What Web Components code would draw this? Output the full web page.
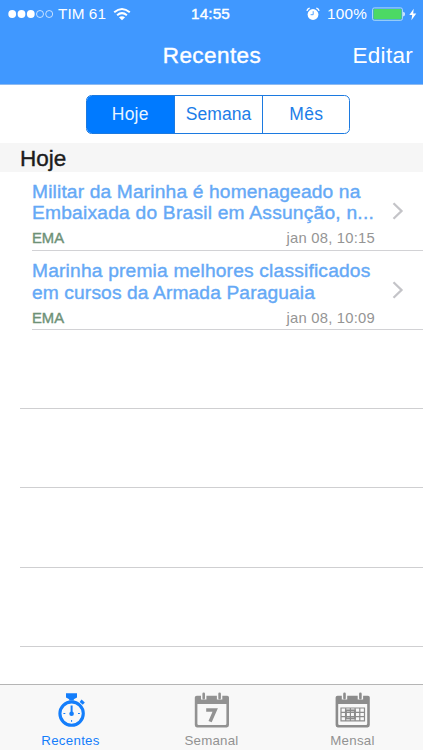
<!DOCTYPE html>
<html lang="pt">
<head>
<meta charset="utf-8">
<title>Recentes</title>
<style>
html,body{margin:0;height:100%;background:#fff;overflow:hidden}
body{font-family:"Liberation Sans",Arial,sans-serif}
</style>
</head>
<body>
<recent-app></recent-app>
<script>
const define = (name, html, ready) => customElements.define(name, class extends HTMLElement {
  connectedCallback() {
    if (this.shadowRoot) return;
    const t = document.createElement('template');
    t.innerHTML = typeof html === 'function' ? html(this) : html;
    this.attachShadow({mode: 'open'}).append(t.content.cloneNode(true));
    if (ready) ready(this);
  }
});

/* A single line of text tracked to a given width */
define('tracked-text', `<style>
:host{display:block;white-space:nowrap;line-height:1}
:host([medium]){-webkit-text-stroke:.4px currentColor}
span{display:inline-block}
</style><span><slot></slot></span>`, el => {
  const s = el.shadowRoot.querySelector('span'), w = +el.getAttribute('width');
  const n = el.textContent.length;
  s.style.letterSpacing = (w - s.getBoundingClientRect().width) / n + 'px';
});

define('status-bar', `<style>
:host{display:flex;height:28px;align-items:center;position:relative;color:#fff;font-size:15.3px;padding:0 6px 0 8px;box-sizing:border-box}
svg{display:block;flex:none}
.dots{margin-right:5px}
.wifi{margin-left:7px}
.time{margin-left:60px}
.alarm{margin-left:76px;margin-right:7px}
.bat{margin-left:5px}
.bolt{margin-left:4px}
</style>
<svg class="dots" width="45" height="10" viewBox="0 0 45 10"><g fill="#fff"><circle cx="4.2" cy="5" r="3.9"/><circle cx="13.5" cy="5" r="3.9"/><circle cx="22.8" cy="5" r="3.9"/></g><g fill="none" stroke="#fff" stroke-width=".7"><circle cx="32" cy="5" r="3.5"/><circle cx="41.2" cy="5" r="3.5"/></g></svg>
<tracked-text width="48">TIM 61</tracked-text>
<svg class="wifi" width="18" height="14" viewBox="0 0 18 14"><g fill="none" stroke="#fff" stroke-width="2"><path d="M1.2 5.3Q9-1.4 16.8 5.3"/><path d="M4.1 8.2Q9 4.1 13.9 8.2"/></g><path d="M9 13.3L5.9 10.3Q9 8 12.1 10.3Z" fill="#fff"/></svg>
<tracked-text class="time" medium width="39">14:55</tracked-text>
<svg class="alarm" width="14" height="14" viewBox="0 0 14 14"><circle cx="7" cy="7.5" r="5.4" fill="#fff"/><path d="M1 4.1Q1.1 1.7 3.7 1.1M13 4.1Q12.9 1.7 10.3 1.1" fill="none" stroke="#fff" stroke-width="1.1"/><path d="M7.2 4.2V7.7H4.6" fill="none" stroke="#4098ff" stroke-width=".9"/></svg>
<tracked-text width="40">100%</tracked-text>
<svg class="bat" width="33" height="14" viewBox="0 0 33 14"><rect x=".5" y=".9" width="30" height="12.4" rx="1.8" fill="#4098ff" stroke="#c7e9f4" stroke-width=".8"/><rect x="1.5" y="1.9" width="28" height="10.4" rx=".8" fill="#4cd964"/><path d="M31.3 4.8Q32.8 5 32.8 7.1T31.3 9.4Z" fill="#fff"/></svg>
<svg class="bolt" width="8" height="13" viewBox="0 0 8 13"><path d="M4.7.8L.3 7.1H3.2L2.4 12.2L7.3 5.5H4.2Z" fill="#fff"/></svg>`);

define('nav-bar', `<style>
:host{display:block;height:85px;box-sizing:border-box;background:#4098ff;border-bottom:1px solid #8ebaf0;color:#fff}
.row{display:grid;grid-template-columns:1fr auto 1fr;align-items:center;height:56px;padding:0 10px 0 11px;font-size:22.5px}
.edit{justify-self:end}
</style><slot name="status"></slot>
<div class="row"><i></i><tracked-text medium width="98.5">Recentes</tracked-text><tracked-text class="edit" width="60.5">Editar</tracked-text></div>`);

define('segment-control', `<style>
:host{display:flex;justify-content:center;padding:10px 0 9px 13px;height:58px;box-sizing:border-box;color:#1c7de8;font-size:17.5px}
.box{display:grid;grid-template-columns:87px 88.5px 87px;width:264.5px;height:38.5px;box-sizing:border-box;border:1px solid #1c7ae0;border-radius:5.5px;overflow:hidden}
.box div{display:flex;align-items:center;justify-content:center}
.box div+div{border-left:1px solid #1c7ae0}
.box .on{background:#007aff;color:#e8f5ff}
</style><div class="box"><div class="on"><tracked-text width="37">Hoje</tracked-text></div><div><tracked-text width="65.5">Semana</tracked-text></div><div><tracked-text width="34">Mês</tracked-text></div></div>`);

define('section-header', `<style>
:host{display:flex;align-items:center;height:28.5px;padding:3px 0 0 20px;box-sizing:border-box;background:#f6f6f6;color:#1c1c1c;font-size:22.5px}
</style><tracked-text medium width="49"><slot></slot></tracked-text>`);

define('news-row', el => `<style>
:host{display:grid;grid-template-columns:343px 1fr;height:79.2px;padding-left:32px;box-sizing:border-box;position:relative}
:host::after{content:"";position:absolute;left:32px;right:0;bottom:0;height:1px;background:#d2d2d5}
.title{color:#65a9f6;font-size:19.2px;padding-top:10.2px}
.title tracked-text{height:21.7px}
.meta{display:flex;justify-content:space-between;font-size:14.8px;padding-top:6.3px;color:#959595}
.src{color:#6e9177}
svg{align-self:center;margin-left:17px}
</style><div><div class="title"><tracked-text medium width="${el.getAttribute('w1')}">${el.getAttribute('line1')}</tracked-text><tracked-text medium width="${el.getAttribute('w2')}">${el.getAttribute('line2')}</tracked-text></div>
<div class="meta"><tracked-text class="src" medium width="32">EMA</tracked-text><tracked-text width="88.5">${el.getAttribute('date')}</tracked-text></div></div>
<svg width="13" height="20" viewBox="0 0 13 20"><path d="M1.5 2.2L9.5 10L1.5 17.8" fill="none" stroke="#c4c4c8" stroke-width="2.3"/></svg>`);

define('empty-row', `<style>:host{display:block;height:79.3px;margin-left:20px;box-sizing:border-box;border-bottom:1px solid #cfcfd1}</style>`);

define('tab-item', el => `<style>
:host{display:flex;flex-direction:column;align-items:center;font-size:13.3px;color:#929292;padding-top:6px}
:host([active]){color:#147efb}
.icon{height:43px;display:block}
</style><slot class="icon"></slot><tracked-text width="${el.getAttribute('width')}">${el.getAttribute('label')}</tracked-text>`);

define('tab-bar', `<style>
:host{display:grid;grid-template-columns:repeat(3,1fr);height:66px;box-sizing:border-box;border-top:1px solid #b5b5b5;background:#f8f8f8}
svg{display:block}
</style>
<tab-item active label="Recentes" width="58.5"><svg width="40" height="40" viewBox="0 0 40 40">
<g fill="#147efb"><path d="M15 2.2H26V6.4L22.8 8.2V9.5H18.2V8.2L15 6.4Z"/><path d="M30.6 8.6L33.8 11.4L31.8 13.8L28.6 11Z"/></g>
<circle cx="20.6" cy="22.6" r="11.7" fill="none" stroke="#147efb" stroke-width="3.1"/><path d="M20.6 14.5V22" stroke="#147efb" stroke-width="2"/><circle cx="20.6" cy="22.8" r="2.3" fill="#147efb"/><path d="M12.4 22.5H14.3M27 22.5H28.9M20.6 29V30.9" stroke="#147efb"/></svg></tab-item>
<tab-item label="Semanal" width="54"><svg width="40" height="40" viewBox="-.2 0 40 40">
<path fill="#929292" fill-rule="evenodd" d="M4.6 4.7H35Q36.8 4.7 36.8 6.5V34Q36.8 36.4 34.6 36.4H4.8Q2.6 36.4 2.6 34V6.5Q2.6 4.7 4.6 4.7ZM5.2 13V32.8Q5.2 34 6.4 34H33Q34.2 34 34.2 32.8V13Z"/>
<path d="M11.5 0V8.5M27.4 0V8.5" stroke="#f8f8f8" stroke-width="5.4"/><path d="M11.5 2.8V7.3M27.4 2.8V7.3" stroke="#929292" stroke-width="2.6" stroke-linecap="round"/>
<path d="M14 19H23L17.9 30.6" fill="none" stroke="#929292" stroke-width="3.5"/></svg></tab-item>
<tab-item label="Mensal" width="44.5"><svg width="40" height="40" viewBox="0 0 40 40">
<path fill="#8c8c8c" fill-rule="evenodd" d="M4.6 4.7H35Q36.8 4.7 36.8 6.5V34Q36.8 36.4 34.6 36.4H4.8Q2.6 36.4 2.6 34V6.5Q2.6 4.7 4.6 4.7ZM5.2 13V32.8Q5.2 34 6.4 34H33Q34.2 34 34.2 32.8V13Z"/>
<path d="M11.5 0V8.5M27.4 0V8.5" stroke="#f8f8f8" stroke-width="5.4"/><path d="M11.5 2.8V7.3M27.4 2.8V7.3" stroke="#8c8c8c" stroke-width="2.6" stroke-linecap="round"/>
<path d="M8 17H31.5V29.8H8ZM8 21.3H31.5M8 25.6H31.5M12.7 17V29.8M17.4 17V29.8M22.1 17V29.8M26.8 17V29.8" fill="none" stroke="#8c8c8c" stroke-width="1.2"/><rect x="12.9" y="19.4" width="9" height="8" fill="none" stroke="#8c8c8c" stroke-width="1.9"/></svg></tab-item>`);

define('recent-app', `<style>
:host{display:flex;flex-direction:column;height:750px;width:423px;background:#fff;overflow:hidden}
main{flex:1;min-height:0;overflow:hidden}
nav-bar,tab-bar{flex:none}
</style>
<nav-bar><status-bar slot="status"></status-bar></nav-bar>
<main><segment-control></segment-control><section-header>Hoje</section-header>
<news-row line1="Militar da Marinha é homenageado na" w1="328.5" line2="Embaixada do Brasil em Assunção, n..." w2="342" date="jan 08, 10:15"></news-row>
<news-row line1="Marinha premia melhores classificados" w1="338.5" line2="em cursos da Armada Paraguaia" w2="283" date="jan 08, 10:09"></news-row>
<empty-row></empty-row><empty-row></empty-row><empty-row></empty-row><empty-row></empty-row></main>
<tab-bar></tab-bar>`);
</script>
</body>
</html>
